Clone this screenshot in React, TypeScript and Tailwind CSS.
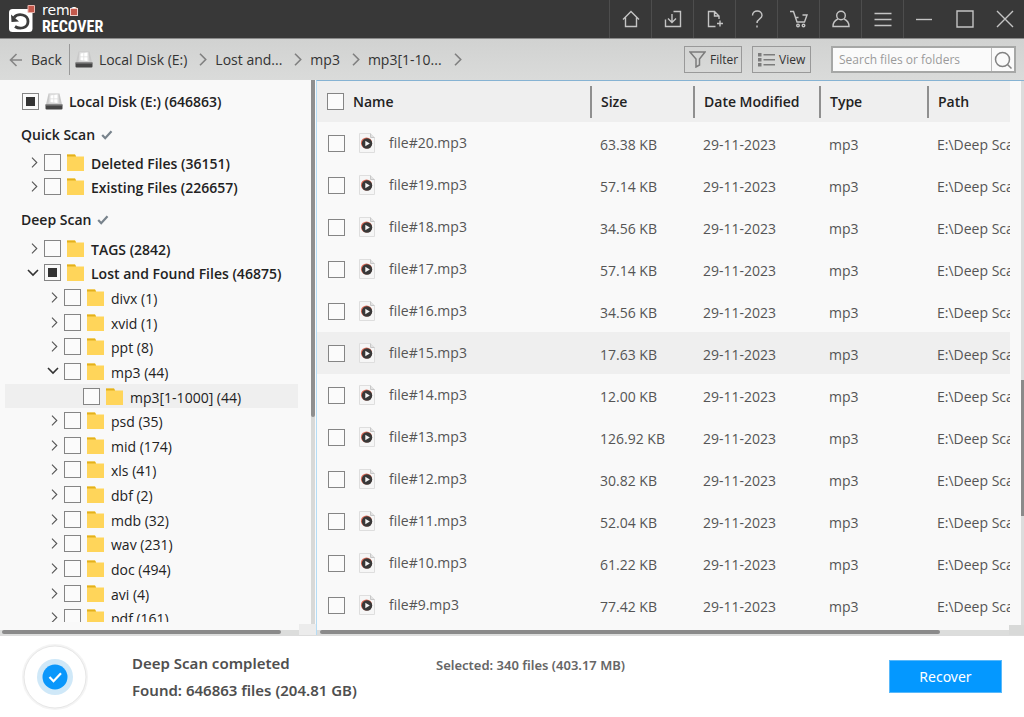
import { useEffect, useRef } from "react";
import type { ReactNode } from "react";

type CheckState = "off" | "mixed";

function TickBox({ label, state = "off" }: { label: string; state?: CheckState }) {
  const ref = useRef<HTMLInputElement>(null);
  useEffect(() => {
    if (ref.current) ref.current.indeterminate = state === "mixed";
  }, [state]);
  return (
    <input
      ref={ref}
      type="checkbox"
      aria-label={label}
      className="block size-[17px] shrink-0 appearance-none border border-[#858585] bg-[#fbfbfb] checked:bg-[#3a3a3a] indeterminate:bg-[#333] indeterminate:shadow-[inset_0_0_0_3px_#fafafa]"
    />
  );
}

function DiskIcon() {
  return (
    <svg width="18" height="17" viewBox="0 0 18 17" className="shrink-0" aria-hidden="true">
      <path d="M3.500 .5h11l2.500 11H1z" fill="#c9c9c9" />
      <path d="M4.500 1h9l1 9.500H3.500z" fill="#dcdcdc" />
      <path d="M5.500 2.500l3-.4v3.400h-3zM9.200 2l3.300-.4v3.900H9.200zM5.500 6.200h3v3.200l-3-.4zM9.200 6.200h3.300v3.700l-3.300-.4z" fill="#fff" />
      <rect x=".5" y="11.500" width="17" height="5" rx="1" fill="#454545" />
      <rect x=".5" y="11" width="17" height="1.500" fill="#8a8a8a" />
    </svg>
  );
}

function FolderIcon() {
  return (
    <svg width="17" height="17" viewBox="0 0 17 17" className="shrink-0" aria-hidden="true">
      <path d="M0 .5h8l1.200 2H17V17H0z" fill="#ffd55a" />
      <path d="M0 .5h8l1 2H0z" fill="#e3b11c" />
    </svg>
  );
}

function MediaFileIcon() {
  return (
    <svg width="16" height="20" viewBox="0 0 16 20" className="shrink-0" aria-hidden="true">
      <path d="M.5.5h11l4 4v15H.5z" fill="#f6f6f6" stroke="#dedede" />
      <path d="M11.500.5v4h4" fill="#e2e2e2" stroke="#c8c8c8" />
      <circle cx="7.500" cy="10" r="5.600" fill="#dc6a55" />
      <circle cx="8" cy="10.500" r="5.200" fill="#383838" />
      <path d="M6.300 7.800l4.500 2.700-4.500 2.700z" fill="#f5f5f5" />
    </svg>
  );
}

function Chevron({ className }: { className: string }) {
  return (
    <svg viewBox="0 0 8 13" className={className} fill="none" stroke="currentColor" aria-hidden="true">
      <path d="M1 .8l5.700 5.700L1 12.200" />
    </svg>
  );
}

function DoneTick() {
  return (
    <svg width="12" height="10" viewBox="0 0 12 10" fill="none" aria-hidden="true">
      <path d="M1.200 5l3 3.200L10.500 1.200" stroke="#78838c" strokeWidth="2.200" />
    </svg>
  );
}

const stroke = { fill: "none", stroke: "#c4c4c4", strokeWidth: 1.4 } as const;

const tools: { label: string; icon: ReactNode }[] = [
  { label: "Home", icon: <path d="M1 9.500L9 1.500l8 8M3.500 7.500v9h11v-9" /> },
  { label: "Save session", icon: <path d="M9.500 1.500h7v15H1.500v-7M8 4v8.500M4 8.500l4 4 4-4M1.500 10v6.500" /> },
  { label: "Open session", icon: <path d="M9.500 16.500H2.500v-15h6l4.500 4.500v3M8.500 1.500V6H13M14 10.500v6M11 13.500h6" /> },
  {
    label: "Help",
    icon: (
      <>
        <path d="M4.500 5.500c0-6 9.500-6 9.500 0 0 3.500-5 3.200-5 7.500" />
        <path d="M9 15.500v2" />
      </>
    ),
  },
  {
    label: "Cart",
    icon: (
      <>
        <path d="M0 1.500h3.500l3.500 10.500h7.500l2.500-7h-4.500M5.500 7.500h3" />
        <circle cx="8" cy="15.500" r="1.300" />
        <circle cx="13.500" cy="15.500" r="1.300" />
      </>
    ),
  },
  {
    label: "Account",
    icon: (
      <>
        <circle cx="9" cy="5.500" r="4.300" />
        <path d="M5.800 9C2.500 10.500 1 13 1 16.500h16c0-3.500-1.500-6-4.800-7.500" />
      </>
    ),
  },
  { label: "Menu", icon: <path d="M.5 3.500h17M.5 9.500h17M.5 15.500h17" /> },
];

function TitleBar() {
  return (
    <header className="flex h-[39px] shrink-0 items-stretch border-b border-[#8a8a8a] bg-[#383838]">
      <h1 className="flex flex-1 items-center gap-[7px] pl-2 font-normal text-white">
        <svg width="27" height="28" viewBox="0 0 27 28" aria-hidden="true">
          <rect x="1" y="4" width="23.500" height="23" rx="3.500" fill="#fff" />
          <path d="M6 12.500c4.500-5 14-3 14 4 0 7-8.500 8-13 5" fill="none" stroke="#3c3c3c" strokeWidth="2.800" />
          <path d="M3 9.500l.5 7.500 7.500-.5z" fill="#3c3c3c" />
          <rect x="19.500" y="0" width="7.500" height="8" rx="1" fill="#e8b5ae" />
          <rect x="20.500" y="1" width="5.500" height="6" fill="#c4594c" />
        </svg>
        <span className="flex flex-col gap-[2px]">
          <span className="flex items-center font-['DejaVu_Sans',sans-serif] text-[14px] leading-3">
            rem
            <span className="relative">
              o
              <span className="absolute inset-x-0 top-1 h-2 border border-[#f0d0cc] bg-[#c4594c]" />
            </span>
          </span>
          <span className="font-['Liberation_Sans_Narrow','Roboto_Condensed',sans-serif] text-[16px] leading-[17px] font-bold">RECOVER</span>
        </span>
      </h1>
      <nav aria-label="Tools" className="flex items-stretch">
        {tools.map((t) => (
          <button key={t.label} aria-label={t.label} className="flex w-[42px] items-center justify-center border-l border-[#4d4d4d]">
            <svg width="18" height="18" viewBox="0 0 18 18" {...stroke}>{t.icon}</svg>
          </button>
        ))}
        <button aria-label="Minimize" className="flex w-[41px] items-center justify-center border-l border-[#4d4d4d]">
          <svg width="18" height="18" viewBox="0 0 18 18" {...stroke}><path d="M1 9.500h16" /></svg>
        </button>
        <button aria-label="Maximize" className="flex w-[41px] items-center justify-center">
          <svg width="18" height="18" viewBox="0 0 18 18" {...stroke}><path d="M1 1h16v16H1z" /></svg>
        </button>
        <button aria-label="Close" className="flex w-[39px] items-center justify-center">
          <svg width="18" height="18" viewBox="0 0 18 18" {...stroke}><path d="M1 1l16 16M17 1L1 17" /></svg>
        </button>
      </nav>
    </header>
  );
}

const crumbs = ["Local Disk (E:)", "Lost and...", "mp3", "mp3[1-10..."];

function Toolbar() {
  return (
    <div className="flex h-[41px] shrink-0 items-center bg-linear-to-b from-[#d1d2d1] to-[#dadbda] pr-2 text-[#333]">
      <button className="flex items-center gap-[9px] pl-[9px] text-[14px]">
        <svg width="13" height="14" viewBox="0 0 13 14" fill="none" stroke="#858585" strokeWidth="1.600" aria-hidden="true">
          <path d="M13 7H1.500M7.500 1L1.500 7l6 6" />
        </svg>
        Back
      </button>
      <div className="mr-[5px] ml-[7px] h-[31px] w-px bg-[#999]" />
      <nav aria-label="Breadcrumb" className="flex flex-1 items-center gap-[6px]">
        <DiskIcon />
        <ol className="flex items-center gap-2 text-[14px]">
          {crumbs.map((c) => (
            <li key={c} className="flex items-center gap-3">
              <a href="#">{c}</a>
              <Chevron className="h-[13px] w-2 text-[#808080] [stroke-width:1.6]" />
            </li>
          ))}
        </ol>
      </nav>
      <button className="mr-[10px] flex h-[27px] w-[58px] items-center gap-1 border border-[#999] pl-1 text-[12px]">
        <svg width="17" height="17" viewBox="0 0 17 17" fill="none" stroke="#7c7c7c" strokeWidth="1.500" className="shrink-0" aria-hidden="true">
          <path d="M1 1h15l-5.500 7v6l-3.500 2V8z" />
        </svg>
        Filter
      </button>
      <button className="mr-5 flex h-[27px] w-[59px] items-center gap-1 border border-[#999] pl-[5px] text-[12px]">
        <svg width="17" height="14" viewBox="0 0 17 14" className="shrink-0" aria-hidden="true">
          <path d="M0 0h3.500v3.500H0zM0 5h3.500v3.500H0zM0 10h3.500v3.500H0zM5.500 1h11.500v1.400H5.500zM5.500 6h11.500v1.400H5.500zM5.500 11h11.500v1.400H5.500z" fill="#7c7c7c" />
        </svg>
        View
      </button>
      <form className="flex h-[27px] w-[185px] items-center border-2 border-[#a6a7a6] bg-[#fafafa]">
        <input
          type="search"
          aria-label="Search files or folders"
          placeholder="Search files or folders"
          className="h-full min-w-0 flex-1 pl-[6px] text-[12px] outline-none placeholder:text-[#9a9a9a]"
        />
        <button type="button" aria-label="Search" className="flex h-full w-[23px] items-center justify-center border-l border-[#bbb]">
          <svg width="18" height="18" viewBox="0 0 18 18" fill="none" stroke="#828282" strokeWidth="1.500">
            <circle cx="8.500" cy="8.500" r="7" />
            <path d="M13.500 13.500l4 4" />
          </svg>
        </button>
      </form>
    </div>
  );
}

type Node = { name: string; level: 0 | 1 | 2; open?: boolean; leaf?: boolean; state?: CheckState; active?: boolean };

const quick: Node[] = [
  { name: "Deleted Files (36151)", level: 0 },
  { name: "Existing Files (226657)", level: 0 },
];

const deep: Node[] = [
  { name: "TAGS (2842)", level: 0 },
  { name: "Lost and Found Files (46875)", level: 0, open: true, state: "mixed" },
  { name: "divx (1)", level: 1 },
  { name: "xvid (1)", level: 1 },
  { name: "ppt (8)", level: 1 },
  { name: "mp3 (44)", level: 1, open: true },
  { name: "mp3[1-1000] (44)", level: 2, leaf: true, active: true },
  { name: "psd (35)", level: 1 },
  { name: "mid (174)", level: 1 },
  { name: "xls (41)", level: 1 },
  { name: "dbf (2)", level: 1 },
  { name: "mdb (32)", level: 1 },
  { name: "wav (231)", level: 1 },
  { name: "doc (494)", level: 1 },
  { name: "avi (4)", level: 1 },
  { name: "pdf (161)", level: 1 },
];

const indent = { 0: "pl-[22px]", 1: "pl-[42px]", 2: "pl-[61px]" };

function TreeRow({ node }: { node: Node }) {
  return (
    <li className={`ml-[5px] flex items-center ${indent[node.level]} ${node.active ? "bg-[#efefef]" : ""}`}>
      {node.leaf ? (
        <span className="w-[17px]" />
      ) : (
        <button aria-label={`Toggle ${node.name}`} aria-expanded={!!node.open} className="flex w-[17px] items-center justify-start">
          {node.open ? (
            <svg width="12" height="8" viewBox="0 0 12 8" fill="none" stroke="#333" strokeWidth="1.600" aria-hidden="true">
              <path d="M1 1l5 5 5-5" />
            </svg>
          ) : (
            <Chevron className="ml-1 h-[11px] w-[7px] text-[#555] [stroke-width:1.3]" />
          )}
        </button>
      )}
      <TickBox label={node.name} state={node.state} />
      <span className="ml-[6px]"><FolderIcon /></span>
      <span className={`ml-[7px] pt-[2px] text-[14px] whitespace-nowrap text-[#222] ${node.level === 0 ? "font-semibold" : ""}`}>{node.name}</span>
    </li>
  );
}

function Sidebar() {
  return (
    <aside className="flex w-[316px] shrink-0 flex-col bg-[#f9f9f9]">
      <div className="flex min-h-0 flex-1">
        <div className="mb-[2px] flex-1 overflow-hidden pr-[13px] text-[#222]">
          <div className="flex items-center gap-[6px] pt-[11px] pl-[22px] text-[14px] font-semibold">
            <TickBox label="Local Disk (E:)" state="mixed" />
            <DiskIcon />
            Local Disk (E:) (646863)
          </div>
          <h2 className="mt-3 flex items-center gap-[6px] pl-[21px] text-[14px] font-semibold">
            Quick Scan <DoneTick />
          </h2>
          <ul className="mt-[5px] grid h-[49px] auto-rows-fr">
            {quick.map((n) => <TreeRow key={n.name} node={n} />)}
          </ul>
          <h2 className="mt-[10px] flex items-center gap-[6px] pl-[21px] text-[14px] font-semibold">
            Deep Scan <DoneTick />
          </h2>
          <ul className="mt-[6px] grid h-[394px] auto-rows-fr">
            {deep.map((n) => <TreeRow key={n.name} node={n} />)}
          </ul>
        </div>
        <div className="mr-px w-1 bg-[#d8d9d8]">
          <div className="h-[62%] rounded-b-xs bg-[#8f8f8f]" />
        </div>
      </div>
      <div className="flex h-[11px] shrink-0 items-end">
        <div className="h-[5px] flex-1 bg-[#dcdddc] pl-[2px]">
          <div className="h-1 w-[94%] rounded-full bg-[#8a8a8a]" />
        </div>
        <div className="h-full w-[17px] bg-[#ececec]" />
      </div>
    </aside>
  );
}

const files = [
  ["file#20.mp3", "63.38 KB"],
  ["file#19.mp3", "57.14 KB"],
  ["file#18.mp3", "34.56 KB"],
  ["file#17.mp3", "57.14 KB"],
  ["file#16.mp3", "34.56 KB"],
  ["file#15.mp3", "17.63 KB"],
  ["file#14.mp3", "12.00 KB"],
  ["file#13.mp3", "126.92 KB"],
  ["file#12.mp3", "30.82 KB"],
  ["file#11.mp3", "52.04 KB"],
  ["file#10.mp3", "61.22 KB"],
  ["file#9.mp3", "77.42 KB"],
];

function HeadCell({ children }: { children: ReactNode }) {
  return (
    <th className="p-0 text-left font-semibold">
      <div className="flex h-8 items-center border-l-2 border-[#8f8f8f] pl-[9px] whitespace-nowrap">{children}</div>
    </th>
  );
}

function FileTable() {
  return (
    <main className="flex min-w-0 flex-1 flex-col border-t border-l border-t-[#86b3d3] border-l-[#b5dcf5] bg-[#f9f9f9]">
      <div className="flex min-h-0 flex-1">
        <div className="min-w-0 flex-1 overflow-hidden">
          <table className="w-full table-fixed border-collapse text-[14px] text-[#555]">
            <colgroup>
              <col />
              <col className="w-[103px]" />
              <col className="w-[126px]" />
              <col className="w-[108px]" />
              <col className="w-[83px]" />
            </colgroup>
            <thead className="bg-[#efefef] text-[#222]">
              <tr className="h-[41px]">
                <th className="p-0 text-left font-semibold">
                  <div className="flex items-center gap-[9px] pl-[10px]">
                    <TickBox label="Select all" />
                    Name
                  </div>
                </th>
                <HeadCell>Size</HeadCell>
                <HeadCell>Date Modified</HeadCell>
                <HeadCell>Type</HeadCell>
                <HeadCell>Path</HeadCell>
              </tr>
            </thead>
            <tbody>
              {files.map(([name, size]) => (
                <tr key={name} className={name === "file#15.mp3" ? "h-[42px] bg-[#efefef]" : "h-[42px]"}>
                  <td className="p-0">
                    <div className="flex items-center pl-[11px]">
                      <TickBox label={name} />
                      <span className="mx-[14px]"><MediaFileIcon /></span>
                      <span className="pb-[2px]">{name}</span>
                    </div>
                  </td>
                  <td className="p-0 pt-[2px] pl-[10px] whitespace-nowrap">{size}</td>
                  <td className="p-0 pt-[2px] pl-[10px] whitespace-nowrap">29-11-2023</td>
                  <td className="p-0 pt-[2px] pl-[10px] whitespace-nowrap">mp3</td>
                  <td className="overflow-hidden p-0 pt-[2px] pl-[10px] whitespace-nowrap">E:\Deep Scan</td>
                </tr>
              ))}
            </tbody>
          </table>
        </div>
        <div className="ml-[11px] flex w-[3px] flex-col bg-[#dcdcdc]">
          <div className="h-[55%]" />
          <div className="h-1/4 bg-[#8a8a8a]" />
        </div>
      </div>
      <div className="flex h-[10px] shrink-0 items-end">
        <div className="h-[5px] flex-1 bg-[#dcdddc] pl-[3px]">
          <div className="h-1 w-[90%] rounded-full bg-[#8a8a8a]" />
        </div>
        <div className="h-full w-[15px] bg-[#d8d9d8]" />
      </div>
    </main>
  );
}

function StatusBar() {
  return (
    <footer className="flex h-[82px] shrink-0 items-center border-t border-[#dcdcdc] bg-white pr-[22px] pl-[22px] font-['Noto_Sans',sans-serif] text-[#4f4f4f]">
      <svg width="66" height="66" viewBox="0 0 66 66" aria-hidden="true">
        <circle cx="33" cy="33" r="32" fill="#fff" stroke="#f4f4f4" strokeWidth="2" />
        <circle cx="33" cy="33" r="31" fill="none" stroke="#e6e6e6" />
        <circle cx="33" cy="33" r="18" fill="#cfe8f8" />
        <circle cx="33" cy="33" r="12.500" fill="#0a97fb" />
        <path d="M27.500 33l4 4.200 7.500-8" fill="none" stroke="#fff" strokeWidth="2.200" />
      </svg>
      <div className="ml-11 flex w-[304px] flex-col gap-[3px] text-[15px] leading-6 font-semibold">
        <p>Deep Scan completed</p>
        <p>Found: 646863 files (204.81 GB)</p>
      </div>
      <p className="mb-[22px] flex-1 text-[13px] font-semibold text-[#666]">Selected: 340 files (403.17 MB)</p>
      <button className="h-[33px] w-[113px] border border-[#59b9fb] bg-[#0498ff] text-[14px] text-white">Recover</button>
    </footer>
  );
}

export default function App() {
  return (
    <div className="flex h-screen flex-col overflow-hidden bg-[#f9f9f9] font-['Open_Sans','Noto_Sans',sans-serif]">
      <TitleBar />
      <Toolbar />
      <div className="flex min-h-0 flex-1">
        <Sidebar />
        <FileTable />
      </div>
      <StatusBar />
    </div>
  );
}
